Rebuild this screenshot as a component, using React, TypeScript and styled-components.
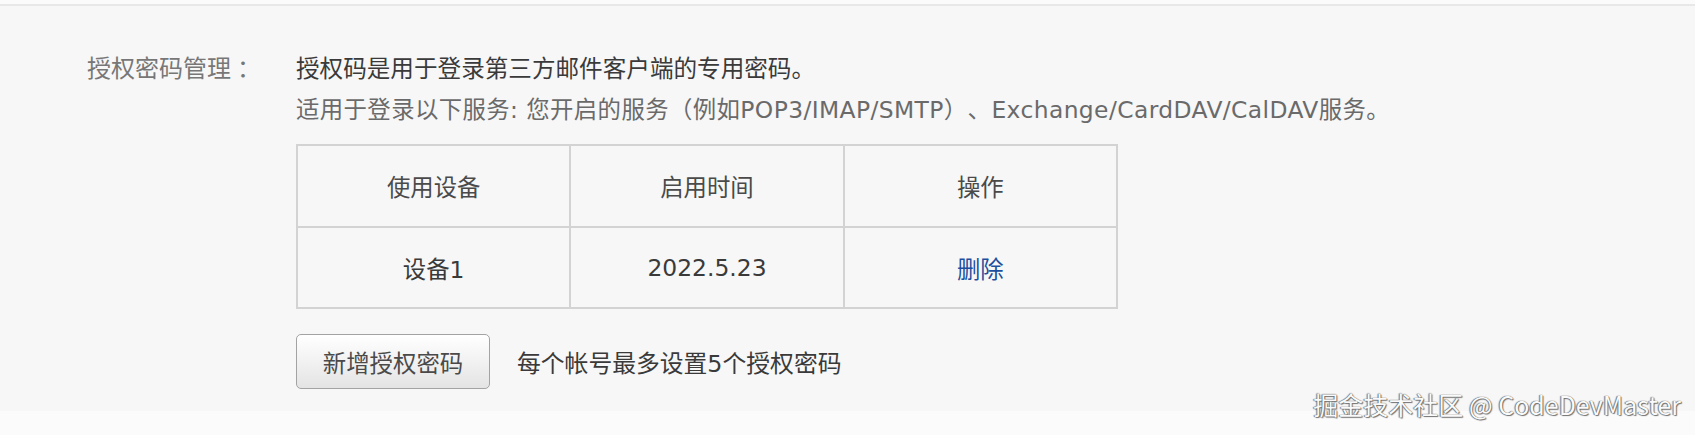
import React from "react";
import styled, { createGlobalStyle } from "styled-components";

const GlobalStyle = createGlobalStyle`
  html, body {
    margin: 0;
    padding: 0;
    background: #ffffff;
  }
  body {
    font-family: "DejaVu Sans", "Noto Sans CJK SC", sans-serif;
    text-spacing-trim: space-all;
  }
`;

const devices = [{ name: "设备1", time: "2022.5.23" }];

const App = () => {
  return (
    <Page>
      <GlobalStyle />
      <Panel>
        <Row>
          <Label>
            授权密码管理<Colon>：</Colon>
          </Label>
          <Content>
            <Intro>授权码是用于登录第三方邮件客户端的专用密码。</Intro>
            <Hint>
              适用于登录以下服务: 您开启的服务（例如POP3/IMAP/SMTP）、Exchange/CardDAV/CalDAV服务。
            </Hint>
            <Table>
              <thead>
                <tr>
                  <HeadCell>使用设备</HeadCell>
                  <HeadCell>启用时间</HeadCell>
                  <HeadCell>操作</HeadCell>
                </tr>
              </thead>
              <tbody>
                {devices.map((d) => (
                  <tr key={d.name}>
                    <Cell>{d.name}</Cell>
                    <Cell>{d.time}</Cell>
                    <Cell>
                      <DeleteLink href="#">删除</DeleteLink>
                    </Cell>
                  </tr>
                ))}
              </tbody>
            </Table>
            <Actions>
              <AddButton type="button">新增授权密码</AddButton>
              <Note>每个帐号最多设置5个授权密码</Note>
            </Actions>
          </Content>
        </Row>
        <Watermark>掘金技术社区 @ CodeDevMaster</Watermark>
      </Panel>
    </Page>
  );
};

const Page = styled.div`
  padding-top: 4px;
  background: #fbfbfb;
  height: 435px;
  box-sizing: border-box;
  overflow: hidden;
`;

const Panel = styled.div`
  position: relative;
  border-top: 2px solid #e8e8e8;
  background: #f7f7f7;
  height: 407px;
  box-sizing: border-box;
  padding: 43px 0 0 87px;
`;

const Row = styled.div`
  display: flex;
  align-items: flex-start;
`;

const Label = styled.div`
  width: 209px;
  flex-shrink: 0;
  font-size: 24px;
  line-height: 41px;
  color: #777777;
`;

const Colon = styled.span`
  margin-left: 6px;
`;

const Content = styled.div`
  display: flex;
  flex-direction: column;
`;

const Intro = styled.div`
  font-size: 23.6px;
  line-height: 41px;
  color: #3a3a3a;
`;

const Hint = styled.div`
  font-size: 23.4px;
  line-height: 41px;
  letter-spacing: 0.4px;
  color: #6a6a6a;
  white-space: nowrap;
`;

const Table = styled.table`
  margin-top: 13px;
  width: 822px;
  border-collapse: collapse;
  table-layout: fixed;
  border: 2px solid #d3d3d3;
`;

const HeadCell = styled.th`
  height: 80px;
  border: 2px solid #d3d3d3;
  font-weight: normal;
  font-size: 23.4px;
  color: #4a4a4a;
  text-align: center;
  vertical-align: middle;
  padding: 0;
`;

const Cell = styled.td`
  height: 79px;
  border: 2px solid #d3d3d3;
  font-size: 23.4px;
  color: #3a3a3a;
  text-align: center;
  vertical-align: middle;
  padding: 0;
`;

const DeleteLink = styled.a`
  color: #1d4f9e;
  text-decoration: none;
`;

const Actions = styled.div`
  display: flex;
  align-items: center;
  gap: 27px;
  margin-top: 25px;
`;

const AddButton = styled.button`
  width: 194px;
  height: 55px;
  border: 1px solid #a3a3a3;
  border-radius: 5px;
  background: linear-gradient(#ffffff, #e4e4e4);
  font-family: "DejaVu Sans", "Noto Sans CJK SC", sans-serif;
  font-size: 23.4px;
  color: #4a4a4a;
  padding: 0;
  cursor: pointer;
`;

const Note = styled.span`
  font-size: 23.8px;
  color: #3a3a3a;
`;

const Watermark = styled.div`
  position: absolute;
  right: 14px;
  bottom: -9px;
  font-family: "Noto Sans CJK SC", sans-serif;
  font-size: 25px;
  line-height: 32px;
  color: #fafafa;
  text-shadow: 0 0 1px #444, 1px 1px 1px #777, -1px 0 1px #888;
  white-space: nowrap;
`;

export default App;
